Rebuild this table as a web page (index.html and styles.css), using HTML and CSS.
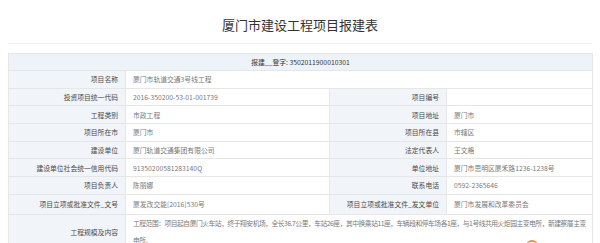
FILE: index.html
```html
<!DOCTYPE html>
<html lang="zh-CN">
<head>
<meta charset="utf-8">
<title>厦门市建设工程项目报建表</title>
<link rel="stylesheet" href="styles.css">
</head>
<body>
<div class="page">
  <h1 class="title">厦门市建设工程项目报建表</h1>
  <div class="rule"></div>
  <table class="form">
    <colgroup>
      <col class="c-label"><col class="c-value"><col class="c-label"><col class="c-value2">
    </colgroup>
    <tr><td colspan="4" class="head">报建__登字: 3502011900010301</td></tr>
    <tr><td class="lbl">项目名称</td><td class="val" colspan="3">厦门市轨道交通3号线工程</td></tr>
    <tr><td class="lbl">投资项目统一代码</td><td class="val">2016-350200-53-01-001739</td><td class="lbl">项目编号</td><td class="val"></td></tr>
    <tr><td class="lbl">工程类别</td><td class="val">市政工程</td><td class="lbl">项目地址</td><td class="val">厦门市</td></tr>
    <tr><td class="lbl">项目所在市</td><td class="val">厦门市</td><td class="lbl">项目所在县</td><td class="val">市辖区</td></tr>
    <tr><td class="lbl">建设单位</td><td class="val">厦门轨道交通集团有限公司</td><td class="lbl">法定代表人</td><td class="val">王文格</td></tr>
    <tr><td class="lbl">建设单位社会统一信用代码</td><td class="val">91350200581283140Q</td><td class="lbl">单位地址</td><td class="val">厦门市思明区厦禾路1236-1238号</td></tr>
    <tr><td class="lbl">项目负责人</td><td class="val">陈丽娜</td><td class="lbl">联系电话</td><td class="val">0592-2365646</td></tr>
    <tr class="tall"><td class="lbl">项目立项或批准文件_文号</td><td class="val">厦发改交能[2016]530号</td><td class="lbl">项目立项或批准文件_发文单位</td><td class="val">厦门市发展和改革委员会</td></tr>
    <tr><td class="lbl">工程规模及内容</td><td class="val long" colspan="3">工程范围：项目起自厦门火车站，终于翔安机场，全长36.7公里，车站26座，其中换乘站11座，车辆段和停车场各1座，与1号线共用火炬园主变电所，新建蔡厝主变电所。</td></tr>
  </table>
</div>
<div class="float-btn"></div>
</body>
</html>
```
FILE: styles.css
```css
html, body {
  margin: 0;
  padding: 0;
  background: #fff;
}
body {
  font-family: "Noto Sans CJK SC", "Noto Sans", sans-serif;
  color: #333;
  overflow: hidden;
}
.page {
  padding: 0 8px;
}
.title {
  margin: 0;
  padding-top: 17px;
  font-size: 13px;
  line-height: 16px;
  font-weight: normal;
  text-align: center;
  color: #333;
}
.rule {
  margin-top: 10px;
  height: 1px;
  background: #efefef;
}
.form {
  margin-top: 9px;
  width: 584px;
  border-collapse: collapse;
  table-layout: fixed;
  font-size: 6.8px;
}
.c-label { width: 117px; }
.c-value { width: 204px; }
.c-value2 { width: 146px; }
.form td {
  border: 1px solid #e6e6e6;
  height: 16.7px;
  padding: 0 7px;
  line-height: 10px;
  white-space: nowrap;
  overflow: hidden;
}
.form .head {
  background: #eef3f9;
  text-align: center;
  color: #333;
  height: 16px;
}
.form .lbl {
  background: #f1f4f9;
  text-align: right;
  color: #4a4a4a;
}
.form .val {
  color: #7a7a7a;
  text-align: left;
}
.form .tall td {
  height: 19px;
}
.form .long {
  white-space: normal;
  line-height: 17px;
  padding: 0 2px 0 7px;
  letter-spacing: -0.5px;
  vertical-align: top;
}
.float-btn {
  position: fixed;
  left: 526px;
  top: 240px;
  width: 12px;
  height: 12px;
  border-radius: 50%;
  border-top: 2px solid #f08a3c;
  box-sizing: border-box;
}
```
